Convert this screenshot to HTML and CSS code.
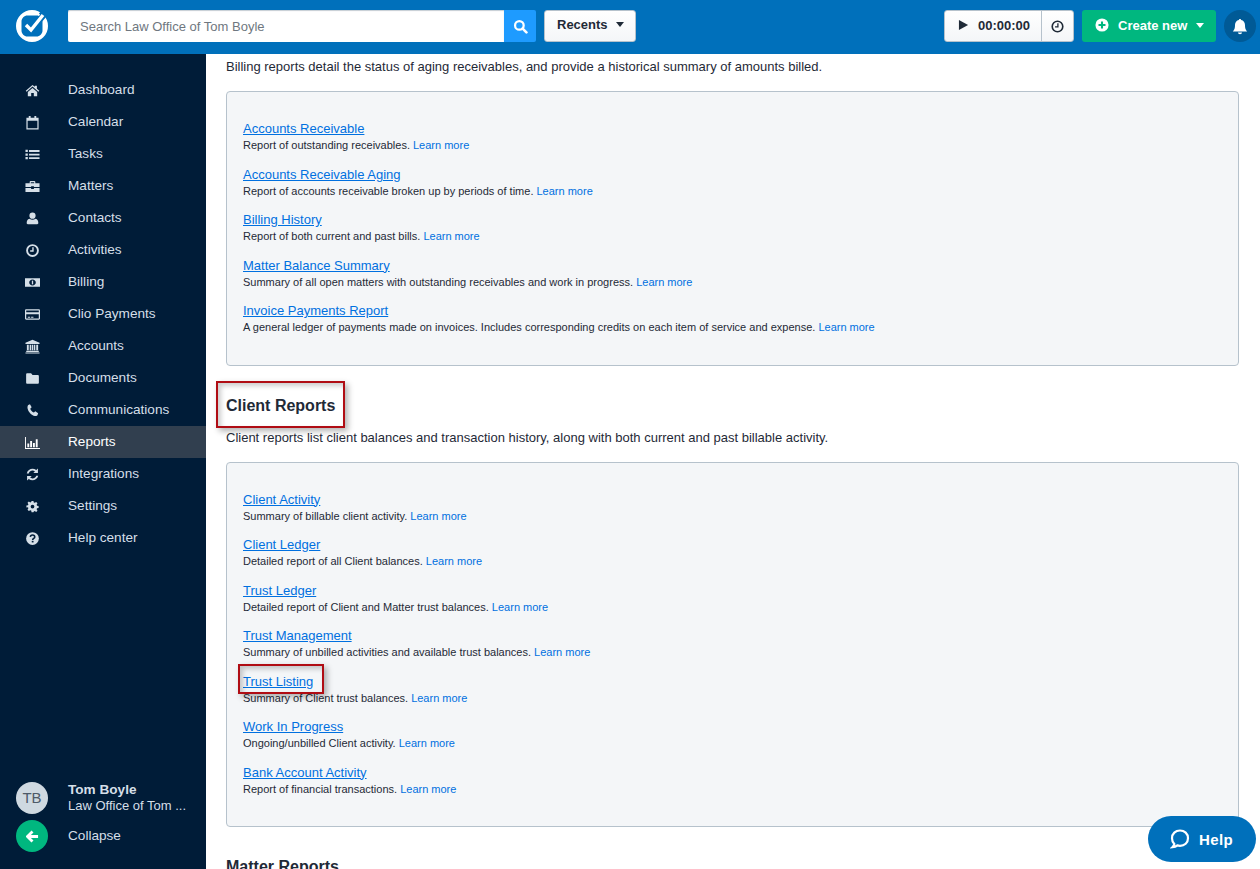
FILE: index.html
```html
<!DOCTYPE html>
<html lang="en">
<head>
  <meta charset="UTF-8">
  <title>Reports</title>
  <link rel="stylesheet" href="styles.css">
</head>
<body>
  <header class="topbar">
    <svg class="logo" viewBox="0 0 32 32" width="32" height="32">
      <path fill-rule="evenodd" d="M16 0a16 16 0 1 0 0 32 16 16 0 0 0 0-32zM11.500 5.500h9c3.300 0 6 2.700 6 6v9c0 3.300-2.700 6-6 6h-9c-3.300 0-6-2.700-6-6v-9c0-3.300 2.700-6 6-6z" fill="#fff"/>
      <path d="M24 4.500l5-5" stroke="#0070bb" stroke-width="3"/>
      <path d="M9.500 14.500l5.500 5.500L29 3.500" fill="none" stroke="#0070bb" stroke-width="6"/>
      <path d="M10 15l5 5L27 5" fill="none" stroke="#fff" stroke-width="3.400"/>
    </svg>
    <div class="search">
      <div class="search-input">Search Law Office of Tom Boyle</div>
      <div class="search-btn">
        <svg viewBox="0 0 16 16" width="15" height="15"><circle cx="6.800" cy="6.800" r="4.600" fill="none" stroke="#fff" stroke-width="2.400"/><path d="M10.300 10.300l4 4" stroke="#fff" stroke-width="2.800" stroke-linecap="round"/></svg>
      </div>
    </div>
    <div class="btn recents">Recents <span class="caret"></span></div>
    <div class="topbar-right">
      <div class="timer">
        <div class="timer-main">
          <svg viewBox="0 0 12 12" width="11" height="12"><path d="M1 .5l10 5.500-10 5.500z" fill="#1f2a37"/></svg>
          <span>00:00:00</span>
        </div>
        <div class="timer-clock">
          <svg viewBox="0 0 16 16" width="13" height="13"><circle cx="8" cy="8" r="6.500" fill="none" stroke="#1f2a37" stroke-width="2"/><path d="M8.500 4v4.500H5" fill="none" stroke="#1f2a37" stroke-width="1.600"/></svg>
        </div>
      </div>
      <div class="create">
        <svg viewBox="0 0 16 16" width="14" height="14"><circle cx="8" cy="8" r="7.500" fill="#fff"/><path d="M8 4v8M4 8h8" stroke="#00b77f" stroke-width="2.400"/></svg>
        <span>Create new</span>
        <span class="caret caret-white"></span>
      </div>
      <div class="bell">
        <svg viewBox="0 0 16 16" width="16" height="17"><path d="M8 .5c.7 0 1.100.5 1.100 1.100C11.500 2 13 4 13 6.500c0 4 1 5 2.200 6.500H.8C2 11.500 3 10.500 3 6.500 3 4 4.500 2 6.900 1.600 6.900 1 7.300.5 8 .5zM6 14h4c0 1-.9 1.700-2 1.700S6 15 6 14z" fill="#fff"/></svg>
      </div>
    </div>
  </header>

  <div class="page">
    <aside class="sidebar">
      <nav class="nav">
        <a class="nav-item"><svg viewBox="0 0 16 16"><path d="M8 2L.8 8.300l.9 1L8 3.800l6.300 5.500.9-1L12.700 6V2.800h-2.200v1.300zM8 5.300L3 9.600V14h3.600v-3.300h2.800V14H13V9.600z"/></svg><span>Dashboard</span></a>
        <a class="nav-item"><svg viewBox="0 0 16 16"><path fill-rule="evenodd" d="M1.500 3H4V1h2v2h4V1h2v2h2.500v12.500h-13zM2.800 6.200v8h10.400v-8z"/></svg><span>Calendar</span></a>
        <a class="nav-item"><svg viewBox="0 0 16 16"><path d="M.5 3h2.500v2.400H.5zM.5 6.800h2.500v2.400H.5zM.5 10.600h2.500V13H.5zM4.300 3.300h11.200v1.900H4.300zM4.300 7.100h11.200V9H4.300zM4.300 10.900h11.200v1.900H4.300z"/></svg><span>Tasks</span></a>
        <a class="nav-item"><svg viewBox="0 0 16 16"><path fill-rule="evenodd" d="M.5 4.500H5V3.200c0-.6.400-1 1-1h4c.6 0 1 .4 1 1v1.300h4.500v4h-6v-.7h-3v.7h-6zM6.200 3.400v1.100h3.600V3.400zM.5 9.500h6v1.200h3V9.500h6v4.300H.5z"/></svg><span>Matters</span></a>
        <a class="nav-item"><svg viewBox="0 0 16 16"><circle cx="8" cy="5" r="3.300"/><path d="M3 14c-.8 0-1.200-.5-1.200-1.200 0-2.300.8-4.300 3-4.600 1.900 1.400 4.500 1.400 6.400 0 2.200.3 3 2.300 3 4.600 0 .7-.4 1.200-1.200 1.200z"/></svg><span>Contacts</span></a>
        <a class="nav-item"><svg viewBox="0 0 16 16"><circle cx="8" cy="8" r="5.800" fill="none" stroke="currentColor" stroke-width="2"/><path d="M8.500 4.500v4H5.500" fill="none" stroke="currentColor" stroke-width="1.500"/></svg><span>Activities</span></a>
        <a class="nav-item"><svg viewBox="0 0 16 16"><path fill-rule="evenodd" d="M0 3.500h16v9H0zM8 4.800C6 4.800 4.500 6.300 4.500 8S6 11.200 8 11.200 11.500 9.700 11.500 8 10 4.800 8 4.800z"/><path d="M7.300 6h1.400v4H7.300z"/></svg><span>Billing</span></a>
        <a class="nav-item"><svg viewBox="0 0 16 16"><path fill-rule="evenodd" d="M1.300 2.500h13.400c.7 0 1.300.6 1.300 1.300v8.400c0 .7-.6 1.300-1.300 1.300H1.300c-.7 0-1.300-.6-1.300-1.300V3.800c0-.7.600-1.300 1.300-1.300zM1.300 3.700v1.900h13.400V3.700zM1.300 7.700v4.600h13.400V7.700zM3 10.500h2.500v.9H3zM6.500 10.500h2.500v.9H6.500z"/></svg><span>Clio Payments</span></a>
        <a class="nav-item"><svg viewBox="0 0 16 16"><path d="M8 .8L.5 4v1.200h15V4zM2 6h2v6H2zM5 6h1.500v6H5zM7.200 6h1.600v6H7.200zM9.500 6H11v6H9.500zM12 6h2v6h-2zM1.300 12.600h13.400v1.300H1.300zM.5 14.300h15v1.200H.5z"/></svg><span>Accounts</span></a>
        <a class="nav-item"><svg viewBox="0 0 16 16"><path d="M2.500 2.500h4l1.500 1.800h5.500c.8 0 1.300.6 1.300 1.300v6.700c0 .8-.5 1.300-1.300 1.300h-11c-.8 0-1.300-.5-1.300-1.300V3.800c0-.7.500-1.300 1.300-1.300z"/></svg><span>Documents</span></a>
        <a class="nav-item"><svg viewBox="0 0 16 16"><path d="M3.500 2l1.800-.7 1.800 3.300-1.500 1.400c.6 1.800 2.100 3.400 3.900 4.200l1.500-1.400 3 2-.6 2c-.4 1-1.600 1.400-2.800 1.100C6.800 12.900 3.400 9.400 2.700 5.500 2.500 4 2.900 2.600 3.500 2z"/></svg><span>Communications</span></a>
        <a class="nav-item active"><svg viewBox="0 0 16 16"><path d="M0 2h1v11.800h15V15H0zM2.500 9h2v4h-2zM5.500 6.500h2V13h-2zM8.500 8.500h2V13h-2zM11.500 4.500h2V13h-2z"/></svg><span>Reports</span></a>
        <a class="nav-item"><svg viewBox="0 0 16 16"><path d="M13.800 1.500v5H8.800l1.800-1.800C8.400 3 5.100 3.800 4 6.800H1.900C3.100 2.200 8.300.6 12 3.300zM2.200 14.500v-5h5l-1.800 1.800c2.200 1.700 5.500.9 6.600-2.100h2.100c-1.200 4.600-6.400 6.200-10.100 3.500z"/></svg><span>Integrations</span></a>
        <a class="nav-item"><svg viewBox="0 0 16 16"><path fill-rule="evenodd" d="M7 2h2l.4 1.700 1 .4 1.500-.9 1.400 1.400-.9 1.500.4 1 1.700.4v2l-1.700.4-.4 1 .9 1.500-1.400 1.400-1.500-.9-1 .4L9 14H7l-.4-1.700-1-.4-1.500.9-1.400-1.400.9-1.500-.4-1L1.500 9V7l1.700-.4.4-1-.9-1.500 1.400-1.400 1.500.9 1-.4zM8 6a2 2 0 1 0 0 4 2 2 0 0 0 0-4z"/></svg><span>Settings</span></a>
        <a class="nav-item"><svg viewBox="0 0 16 16"><circle cx="8" cy="8" r="6.800"/><path d="M5.700 6.300C5.800 5 6.800 4.300 8 4.300c1.400 0 2.400.8 2.400 2 0 1.600-2.200 1.700-2.200 3.200" fill="none" stroke="#001c38" stroke-width="1.700"/><path d="M7.200 10.500h1.900v1.700H7.200z" fill="#001c38"/></svg><span>Help center</span></a>
      </nav>
      <div class="side-foot">
        <div class="foot-row">
          <div class="avatar">TB</div>
          <div class="who">
            <div class="who-name">Tom Boyle</div>
            <div class="who-firm">Law Office of Tom ...</div>
          </div>
        </div>
        <div class="foot-row">
          <div class="collapse-btn">
            <svg viewBox="0 0 14 14" width="13" height="13"><path d="M7 1.500L1.500 7 7 12.500M2 7h11" fill="none" stroke="#fff" stroke-width="3"/></svg>
          </div>
          <div class="collapse-text">Collapse</div>
        </div>
      </div>
    </aside>

    <main class="content">
      <p class="intro">Billing reports detail the status of aging receivables, and provide a historical summary of amounts billed.</p>
      <section class="report-box">
        <div class="report"><a class="report-link">Accounts Receivable</a><div class="report-desc">Report of outstanding receivables. <span class="more">Learn more</span></div></div>
        <div class="report"><a class="report-link">Accounts Receivable Aging</a><div class="report-desc">Report of accounts receivable broken up by periods of time. <span class="more">Learn more</span></div></div>
        <div class="report"><a class="report-link">Billing History</a><div class="report-desc">Report of both current and past bills. <span class="more">Learn more</span></div></div>
        <div class="report"><a class="report-link">Matter Balance Summary</a><div class="report-desc">Summary of all open matters with outstanding receivables and work in progress. <span class="more">Learn more</span></div></div>
        <div class="report"><a class="report-link">Invoice Payments Report</a><div class="report-desc">A general ledger of payments made on invoices. Includes corresponding credits on each item of service and expense. <span class="more">Learn more</span></div></div>
      </section>

      <h2 class="section-title"><span class="marked marked-title">Client Reports</span></h2>
      <p class="intro">Client reports list client balances and transaction history, along with both current and past billable activity.</p>
      <section class="report-box">
        <div class="report"><a class="report-link">Client Activity</a><div class="report-desc">Summary of billable client activity. <span class="more">Learn more</span></div></div>
        <div class="report"><a class="report-link">Client Ledger</a><div class="report-desc">Detailed report of all Client balances. <span class="more">Learn more</span></div></div>
        <div class="report"><a class="report-link">Trust Ledger</a><div class="report-desc">Detailed report of Client and Matter trust balances. <span class="more">Learn more</span></div></div>
        <div class="report"><a class="report-link">Trust Management</a><div class="report-desc">Summary of unbilled activities and available trust balances. <span class="more">Learn more</span></div></div>
        <div class="report"><span class="marked marked-link"><a class="report-link">Trust Listing</a></span><div class="report-desc">Summary of Client trust balances. <span class="more">Learn more</span></div></div>
        <div class="report"><a class="report-link">Work In Progress</a><div class="report-desc">Ongoing/unbilled Client activity. <span class="more">Learn more</span></div></div>
        <div class="report"><a class="report-link">Bank Account Activity</a><div class="report-desc">Report of financial transactions. <span class="more">Learn more</span></div></div>
      </section>

      <h2 class="section-title">Matter Reports</h2>
    </main>
  </div>

  <div class="help">
    <svg viewBox="0 0 20 20" width="20" height="20"><path d="M10 1.500c4.500 0 8 3 8 7.700s-3.500 7.600-8 7.600c-1 0-1.800-.1-2.600-.4-1 .9-3 1.700-5 1.800 1-.9 1.700-2 1.900-3.200C2.800 13.500 2 11.500 2 9.200 2 4.500 5.500 1.500 10 1.500z" fill="none" stroke="#fff" stroke-width="2.200"/></svg>
    <span>Help</span>
  </div>
</body>
</html>
```

FILE: styles.css
```css
* {
  margin: 0;
  padding: 0;
  box-sizing: border-box;
}

body {
  height: 869px;
  overflow: hidden;
  background: #fff;
  color: #1f2a37;
  font-family: "Liberation Sans", Arial, sans-serif;
  font-size: 13px;
}

.topbar {
  height: 54px;
  background: #0070bb;
  display: flex;
  align-items: flex-start;
  padding: 10px 4px 0 16px;
}

.logo {
  flex: none;
  margin-right: 20px;
}

.search {
  display: flex;
  width: 468px;
  height: 32px;
  margin-right: 8px;
}

.search-input {
  flex: 1;
  background: #fff;
  border-radius: 2px 0 0 2px;
  color: #6f7780;
  line-height: 33px;
  padding-left: 12px;
  box-shadow: inset 0 1px 1px #c5ccd3;
}

.search-btn {
  width: 32px;
  background: #1e9bff;
  border-radius: 0 2px 2px 0;
  display: flex;
  align-items: center;
  justify-content: center;
}

.btn {
  height: 32px;
  background: linear-gradient(#fff, #f4f6f8);
  border: 1px solid #b6c2cc;
  border-radius: 3px;
  line-height: 28px;
  font-weight: bold;
  padding: 0 12px;
  white-space: nowrap;
}

.recents {
  width: 92px;
}

.caret {
  display: inline-block;
  border: 4px solid transparent;
  border-top: 5px solid #1f2a37;
  border-bottom: 0;
  margin-left: 5px;
  vertical-align: 2px;
}

.caret-white {
  border-top-color: #fff;
  margin-left: 0;
}

.topbar-right {
  margin-left: auto;
  display: flex;
}

.timer {
  display: flex;
  width: 130px;
  height: 32px;
  background: linear-gradient(#fff, #f4f6f8);
  border: 1px solid #b6c2cc;
  border-radius: 3px;
  margin-right: 8px;
}

.timer-main {
  flex: 1;
  display: flex;
  align-items: center;
  gap: 9px;
  padding: 0 0 2px 13px;
  font-weight: bold;
  border-right: 1px solid #b6c2cc;
}

.timer-clock {
  width: 31px;
  display: flex;
  align-items: center;
  justify-content: center;
}

.create {
  width: 134px;
  height: 32px;
  background: #00b77f;
  border-radius: 3px;
  color: #fff;
  font-weight: bold;
  display: flex;
  align-items: center;
  gap: 9px;
  padding: 0 0 2px 13px;
  margin-right: 8px;
}

.bell {
  width: 32px;
  height: 32px;
  border-radius: 50%;
  background: #005a96;
  display: flex;
  align-items: center;
  justify-content: center;
}

.page {
  display: flex;
  height: 815px;
}

.sidebar {
  width: 206px;
  flex: none;
  background: #001c38;
  color: #d5dfe8;
  font-size: 13.6px;
  padding-top: 20px;
  padding-bottom: 17px;
  display: flex;
  flex-direction: column;
  justify-content: space-between;
}

.nav-item {
  display: flex;
  align-items: center;
  height: 32px;
  padding-left: 24.5px;
  gap: 28.5px;
}

.nav-item span {
  margin-bottom: 2px;
}

.nav-item svg {
  width: 15px;
  height: 15px;
  fill: currentColor;
  flex: none;
}

.nav-item.active {
  background: #313f4f;
  color: #fff;
}

.foot-row {
  display: flex;
  align-items: center;
  padding-left: 16px;
  gap: 20px;
  margin-bottom: 6px;
}

.foot-row:last-child {
  margin-bottom: 0;
}

.avatar {
  width: 32px;
  height: 32px;
  border-radius: 50%;
  background: #cfd9e1;
  color: #4d5a68;
  font-size: 15px;
  line-height: 32px;
  text-align: center;
}

.who {
  margin-top: -1px;
}

.who-name {
  font-weight: bold;
  line-height: 16px;
}

.who-firm {
  font-size: 13px;
  line-height: 16px;
}

.collapse-text {
  margin-top: -2px;
}

.collapse-btn {
  width: 32px;
  height: 32px;
  border-radius: 50%;
  background: #00b77f;
  display: flex;
  align-items: center;
  justify-content: center;
}

.content {
  flex: 1;
  overflow: hidden;
  padding: 3px 21px 0 20px;
}

.intro {
  line-height: 20px;
  margin-bottom: 14px;
}

.report-box {
  background: #f4f6f8;
  border: 1px solid #b6c2cc;
  border-radius: 4px;
  padding: 26px 16px 19px;
}

.report {
  height: 45.5px;
}

.report-link {
  display: inline-block;
  color: #0070e0;
  text-decoration: underline;
  padding-top: 2px;
  line-height: 18px;
}

.report-desc {
  font-size: 11px;
  line-height: 14px;
}

.more {
  color: #0070e0;
}

.section-title {
  font-size: 16px;
  line-height: 20px;
  margin-top: 30px;
  margin-bottom: 12px;
}

/* red annotation boxes laid over the page */
.marked {
  position: relative;
  display: inline-block;
}

.marked::after {
  content: "";
  position: absolute;
  border: 2px solid #b00d14;
  box-shadow: 3px 3px 6px rgba(0, 0, 0, 0.3), inset 3px 3px 5px rgba(0, 0, 0, 0.2);
}

.marked-title::after {
  top: -15px;
  bottom: -12px;
  left: -10px;
  right: -10px;
}

.marked-link::after {
  top: -7px;
  bottom: -3px;
  left: -5px;
  right: -11px;
}

.help {
  position: fixed;
  right: 4px;
  bottom: 7px;
  width: 108px;
  height: 46px;
  border-radius: 23px;
  background: #0070bb;
  color: #fff;
  font-weight: bold;
  font-size: 15px;
  letter-spacing: 0.4px;
  display: flex;
  align-items: center;
  gap: 9px;
  padding-left: 22px;
}
```
